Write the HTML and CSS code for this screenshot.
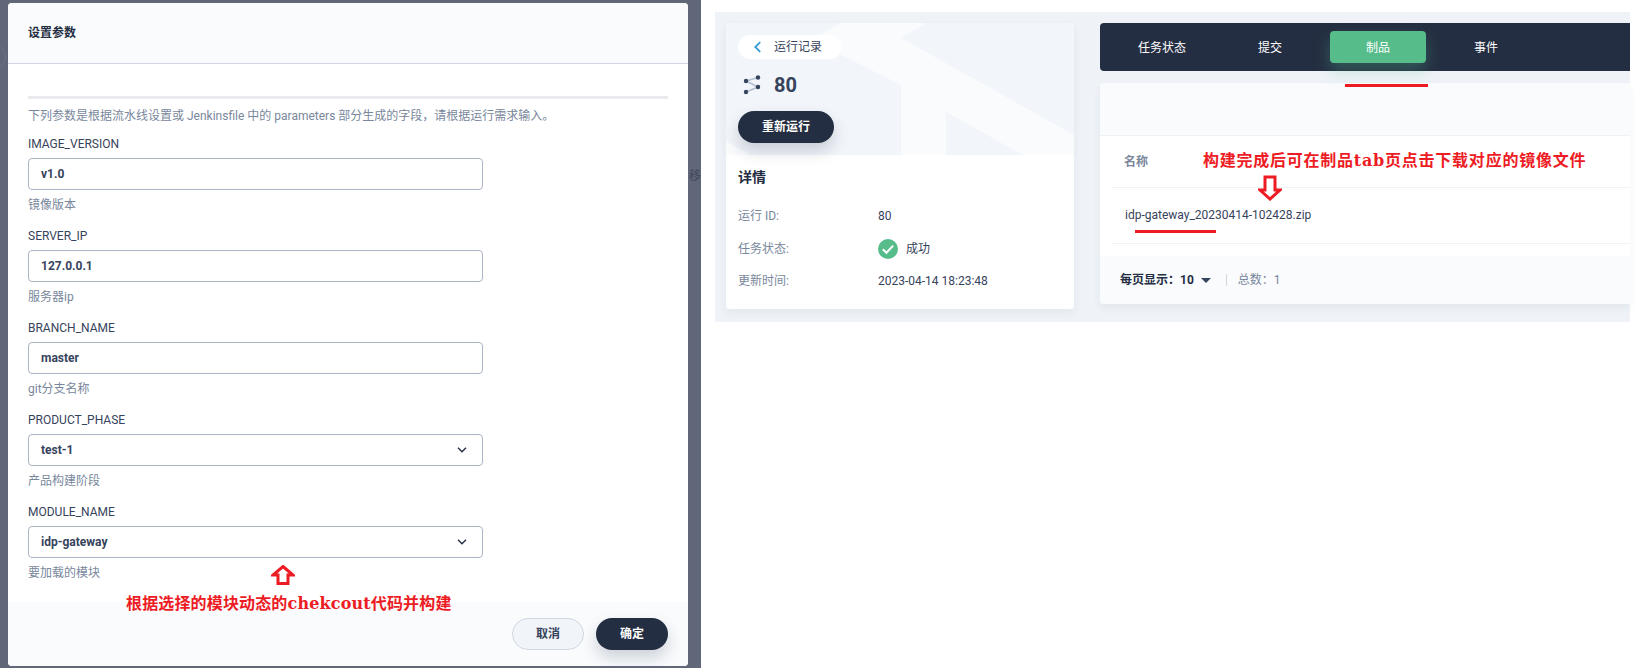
FILE: index.html
```html
<!DOCTYPE html>
<html lang="zh">
    <head>
        <meta charset="UTF-8" />
        <meta name="viewport" content="width=device-width, initial-scale=1.0" />
        <title>设置参数</title>
        <link rel="stylesheet" href="styles.css">
    </head>
    <body>
        <div class="page">
            <!-- left shot: parameters dialog -->
            <div class="overlay">
                <span class="overlay-ring"></span>
                <span class="overlay-text">移</span>
                <div class="modal">
                    <div class="modal-head">设置参数</div>
                    <div class="modal-body">
                        <div class="rule"></div>
                        <p class="intro">下列参数是根据流水线设置或 Jenkinsfile 中的 parameters 部分生成的字段，请根据运行需求输入。</p>

                        <div class="field">
                            <div class="field-label">IMAGE_VERSION</div>
                            <div class="input">v1.0</div>
                            <div class="field-help">镜像版本</div>
                        </div>
                        <div class="field">
                            <div class="field-label">SERVER_IP</div>
                            <div class="input">127.0.0.1</div>
                            <div class="field-help">服务器ip</div>
                        </div>
                        <div class="field">
                            <div class="field-label">BRANCH_NAME</div>
                            <div class="input">master</div>
                            <div class="field-help">git分支名称</div>
                        </div>
                        <div class="field">
                            <div class="field-label">PRODUCT_PHASE</div>
                            <div class="input">test-1
                                <svg class="chevron" viewBox="0 0 10 6"><path d="M1 .8 5 4.8 9 .8" /></svg>
                            </div>
                            <div class="field-help">产品构建阶段</div>
                        </div>
                        <div class="field">
                            <div class="field-label">MODULE_NAME</div>
                            <div class="input">idp-gateway
                                <svg class="chevron" viewBox="0 0 10 6"><path d="M1 .8 5 4.8 9 .8" /></svg>
                            </div>
                            <div class="field-help">要加载的模块</div>
                        </div>
                    </div>
                    <div class="modal-foot">
                        <div class="btn btn-light">取消</div>
                        <div class="btn btn-dark">确定</div>
                    </div>
                </div>
                <svg class="mark-arrow arrow-up" viewBox="0 0 24 20"><path d="M12 1.5 22 10h-5v8.5H7V10H2z" /></svg>
                <div class="mark-text text-left">根据选择的模块动态的chekcout代码并构建</div>
            </div>

            <!-- right shot: run detail -->
            <div class="detail">
                <div class="detail-panel">
                    <div class="side-card">
                        <div class="side-top">
                            <svg class="watermark" viewBox="0 0 348 132">
                                <path d="M115 0h85l-25 15 173 97v20h-51l-77-43v43h-45V62L86 17z" />
                                <path d="M0 118 24 132H0z" />
                            </svg>
                            <div class="back-pill">
                                <svg class="back-icon" viewBox="0 0 10 14"><path d="M8 1.5 2.5 7 8 12.5" /></svg>
                                <span>运行记录</span>
                            </div>
                            <div class="run-title">
                                <svg class="run-icon" viewBox="0 0 18 20">
                                    <path class="run-line" d="M3 6 15 2.5M3 6 15 12M3 17 15 12" />
                                    <circle cx="3" cy="6" r="2.2" />
                                    <circle cx="15" cy="2.5" r="2.2" />
                                    <circle cx="15" cy="12" r="2.2" />
                                    <circle cx="3" cy="17" r="2.2" />
                                </svg>
                                <span>80</span>
                            </div>
                            <div class="btn btn-dark btn-rerun">重新运行</div>
                        </div>
                        <div class="side-body">
                            <h3 class="side-heading">详情</h3>
                            <div class="info-row">
                                <span class="info-key">运行 ID:</span>
                                <span class="info-val">80</span>
                            </div>
                            <div class="info-row">
                                <span class="info-key">任务状态:</span>
                                <span class="info-val">
                                    <svg class="ok-icon" viewBox="0 0 20 20">
                                        <circle cx="10" cy="10" r="10" />
                                        <path d="M4.8 10.3 8.4 13.8 15.2 6.6" />
                                    </svg>
                                    成功
                                </span>
                            </div>
                            <div class="info-row">
                                <span class="info-key">更新时间:</span>
                                <span class="info-val">2023-04-14 18:23:48</span>
                            </div>
                        </div>
                    </div>

                    <div class="main-col">
                        <div class="tabs">
                            <div class="tab">任务状态</div>
                            <div class="tab">提交</div>
                            <div class="tab tab-active">制品</div>
                            <div class="tab">事件</div>
                        </div>
                        <div class="table-card">
                            <div class="table-top"></div>
                            <div class="table-head">名称</div>
                            <div class="table-row">idp-gateway_20230414-102428.zip</div>
                            <div class="table-foot">
                                <span class="per-page">每页显示：10</span>
                                <span class="caret"></span>
                                <span class="foot-sep"></span>
                                <span class="total">总数：1</span>
                            </div>
                        </div>
                    </div>
                </div>
                <div class="mark-line line-tab"></div>
                <div class="mark-line line-file"></div>
                <svg class="mark-arrow arrow-down" viewBox="0 0 24 26"><path d="M7 2h10v13h5L12 24 2 15h5z" /></svg>
                <div class="mark-text text-right">构建完成后可在制品tab页点击下载对应的镜像文件</div>
            </div>
        </div>
    </body>
</html>
```

FILE: styles.css
```css
* {
    margin: 0;
    padding: 0;
    box-sizing: border-box;
}

body {
    width: 1644px;
    height: 668px;
    overflow: hidden;
    background-color: #fff;
    font: 12px/16px Roboto, "Noto Sans CJK SC", sans-serif;
    color: #242e42;
}

.page {
    display: flex;
    height: 668px;
}

/* left: dialog */
.overlay {
    width: 701px;
    height: 668px;
    background-color: #5f6779;
    padding: 3px 13px 2px 8px;
    position: relative;
    overflow: hidden;
    flex-shrink: 0;
}

.overlay-ring {
    position: absolute;
    left: -20px;
    top: 44px;
    width: 26px;
    height: 26px;
    border: 1px solid #6b7385;
    border-radius: 50%;
}

.overlay-text {
    position: absolute;
    left: 689px;
    top: 168px;
    color: #3f4859;
}

.modal {
    height: 663px;
    background-color: #fff;
    border-radius: 4px;
    display: flex;
    flex-direction: column;
    overflow: hidden;
}

.modal-head {
    height: 61px;
    padding: 0 20px;
    line-height: 60px;
    font-weight: 700;
    background-color: #f9fbfd;
    border-bottom: 1px solid #d1d7e2;
}

.modal-body {
    flex: 1;
    padding: 32px 20px 0;
}

.rule {
    height: 3px;
    background-color: #e9ebee;
}

.intro {
    margin-top: 9px;
    color: #79879c;
    line-height: 16px;
}

.field {
    margin-top: 12px;
    height: 92px;
}

.field + .field {
    margin-top: 0;
}

.field-label {
    height: 16px;
    color: #36435c;
}

.input {
    width: 455px;
    height: 32px;
    margin-top: 6px;
    padding: 0 12px;
    border: 1px solid #abb4c4;
    border-radius: 4px;
    background-color: #fff;
    font-weight: 700;
    line-height: 30px;
    color: #36435c;
    position: relative;
}

.chevron {
    position: absolute;
    right: 15px;
    top: 12px;
    width: 10px;
    height: 6px;
    fill: none;
    stroke: #242e42;
    stroke-width: 1.4;
}

.field-help {
    margin-top: 7px;
    color: #79879c;
}

.modal-foot {
    height: 64px;
    padding: 16px 20px 0;
    background-color: #f9fbfd;
    display: flex;
    justify-content: flex-end;
    gap: 12px;
}

.btn {
    width: 72px;
    height: 32px;
    border-radius: 16px;
    text-align: center;
    line-height: 30px;
    font-weight: 700;
}

.btn-light {
    background-color: #f1f5f9;
    border: 1px solid #d1d7e2;
    color: #36435c;
}

.btn-dark {
    background-color: #242e42;
    color: #fff;
    line-height: 32px;
    box-shadow: 0 8px 16px rgba(36, 46, 66, 0.2);
}

/* red notes drawn over the shots */
.mark-text {
    position: absolute;
    color: #ed1c24;
    font: 700 16px/20px "DejaVu Serif", "Noto Sans CJK SC", serif;
    white-space: nowrap;
}

.mark-arrow {
    position: absolute;
    fill: #fff;
    stroke: #ed1c24;
    stroke-width: 3;
}

.arrow-up {
    left: 271px;
    top: 565px;
    width: 24px;
    height: 20px;
}

.text-left {
    left: 126px;
    top: 594px;
    letter-spacing: 0.15px;
}

.mark-line {
    position: absolute;
    height: 3px;
    background-color: #ed1c24;
}

.line-tab {
    left: 644px;
    top: 84px;
    width: 83px;
}

.line-file {
    left: 434px;
    top: 230px;
    width: 81px;
}

.arrow-down {
    left: 557px;
    top: 175px;
    width: 24px;
    height: 26px;
}

.text-right {
    left: 502px;
    top: 151px;
    letter-spacing: 0.76px;
}

/* right: run detail */
.detail {
    flex: 1;
    padding: 12px 14px 0;
    position: relative;
}

.detail-panel {
    height: 310px;
    background-color: #eff3f8;
    padding: 11px 0 0 11px;
    display: flex;
    gap: 26px;
}

.side-card {
    width: 348px;
    height: 286px;
    background-color: #fff;
    border-radius: 4px;
    overflow: hidden;
    box-shadow: 0 4px 8px rgba(36, 46, 66, 0.06);
}

.side-top {
    height: 132px;
    background-color: #f2f5fa;
    padding: 12px;
    position: relative;
}

.watermark {
    position: absolute;
    left: 0;
    top: 0;
    width: 348px;
    height: 132px;
    fill: #f9fbfd;
}

.back-pill {
    width: 104px;
    height: 24px;
    border-radius: 12px;
    background-color: #fff;
    display: flex;
    align-items: center;
    padding-left: 15px;
    gap: 12px;
    color: #36435c;
    position: relative;
}

.back-icon {
    width: 9px;
    height: 14px;
    fill: none;
    stroke: #369ad5;
    stroke-width: 2;
}

.run-title {
    margin-top: 12px;
    height: 28px;
    display: flex;
    align-items: center;
    gap: 13px;
    padding-left: 5px;
    font-size: 20px;
    font-weight: 700;
    color: #36435c;
    position: relative;
}

.run-icon {
    width: 18px;
    height: 20px;
    fill: #36435c;
}

.run-line {
    fill: none;
    stroke: #b4bfcf;
    stroke-width: 1.5;
}

.btn-rerun {
    width: 96px;
    margin-top: 12px;
    position: relative;
}

.side-body {
    padding: 12px 12px;
}

.side-heading {
    font-size: 14px;
    line-height: 20px;
    font-weight: 700;
    color: #242e42;
    margin-bottom: 13px;
}

.info-row {
    display: flex;
    align-items: center;
    height: 32.5px;
}

.info-key {
    width: 140px;
    color: #79879c;
}

.info-val {
    display: flex;
    align-items: center;
    gap: 8px;
    color: #36435c;
}

.ok-icon {
    width: 20px;
    height: 20px;
    fill: #55bc8a;
}

.ok-icon path {
    fill: none;
    stroke: #fff;
    stroke-width: 2;
}

.main-col {
    flex: 1;
    min-width: 0;
}

.tabs {
    height: 48px;
    background-color: #242e42;
    border-radius: 4px 0 0 4px;
    padding: 8px 14px;
    display: flex;
    gap: 12px;
}

.tab {
    width: 96px;
    height: 32px;
    border-radius: 4px;
    text-align: center;
    line-height: 34px;
    color: #fff;
}

.tab-active {
    background-color: #55bc8a;
    box-shadow: 0 8px 16px rgba(85, 188, 138, 0.3);
}

.table-card {
    height: 221px;
    margin-top: 12px;
    background-color: #fff;
    border-radius: 4px 0 0 4px;
    box-shadow: 0 4px 8px rgba(36, 46, 66, 0.06);
    overflow: hidden;
}

.table-top {
    height: 53px;
    background-color: #f9fbfd;
    border-bottom: 1px solid #eff3f8;
}

.table-head {
    height: 52px;
    margin-left: 12px;
    padding-left: 12px;
    line-height: 52px;
    font-weight: 700;
    color: #79879c;
    border-bottom: 1px solid #eff3f8;
}

.table-row {
    height: 56px;
    margin-left: 12px;
    padding-left: 13px;
    line-height: 54px;
    color: #36435c;
    border-bottom: 1px solid #eff3f8;
}

.table-foot {
    height: 48px;
    margin-top: 12px;
    background-color: #f9fbfd;
    padding-left: 20px;
    display: flex;
    align-items: center;
}

.per-page {
    font-weight: 700;
    color: #242e42;
}

.caret {
    width: 0;
    height: 0;
    margin-left: 7px;
    border: 5px solid transparent;
    border-top: 5px solid #36435c;
    border-bottom: 0;
}

.foot-sep {
    width: 1px;
    height: 12px;
    margin: 0 11px 0 15px;
    background-color: #d1d7e2;
}

.total {
    color: #79879c;
}
```
